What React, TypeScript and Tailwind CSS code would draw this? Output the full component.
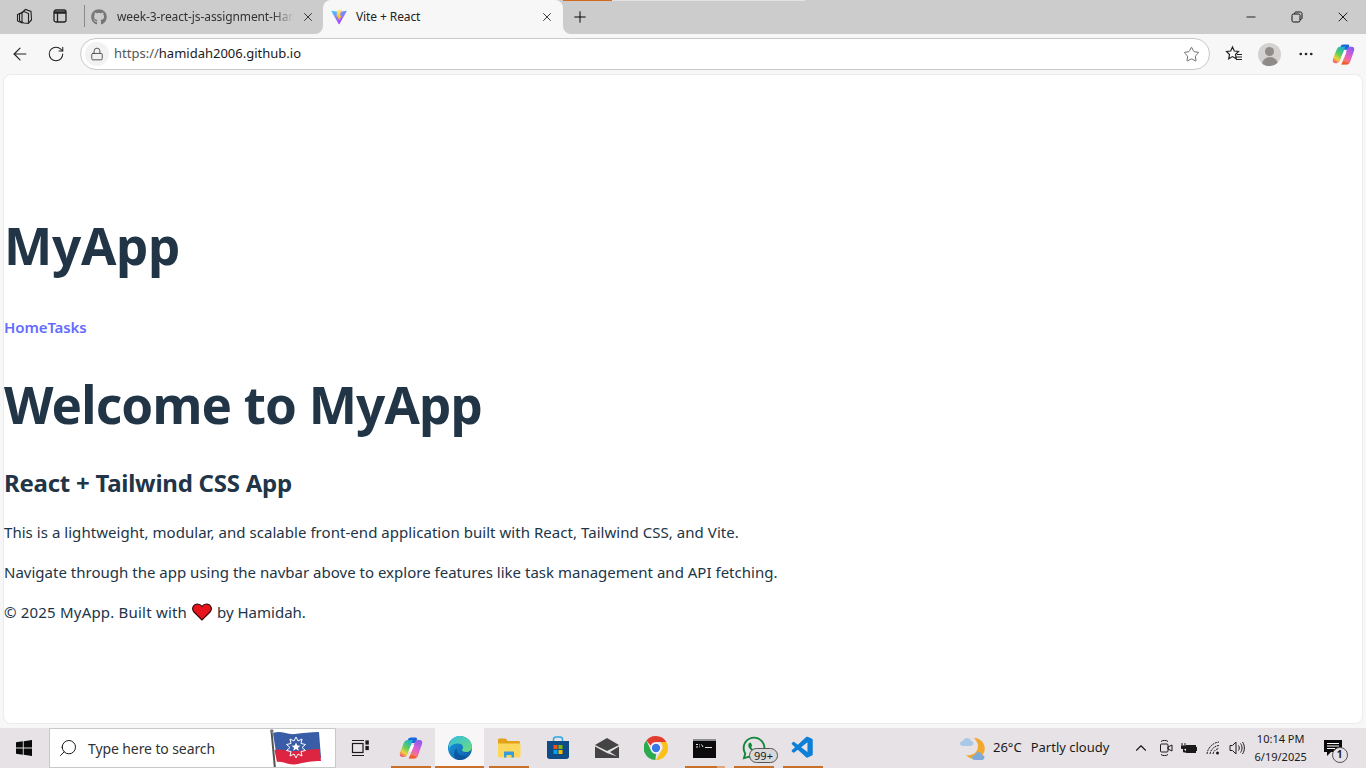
import { ArrowLeft, RotateCw, Lock, Star, X, Plus, Minus, Search, MoreHorizontal, ChevronUp } from "lucide-react";
import { FaGithub, FaWhatsapp } from "react-icons/fa";
import { VscVscode } from "react-icons/vsc";

const uiFont = "font-['Noto_Sans','Open_Sans',sans-serif]";

function ViteLogo() {
  return (
    <svg width="16" height="16" viewBox="0 0 32 32">
      <defs>
        <linearGradient id="viteA" x1="0" y1="0" x2="0.6" y2="1">
          <stop offset="0" stopColor="#41d1ff" />
          <stop offset="1" stopColor="#bd34fe" />
        </linearGradient>
        <linearGradient id="viteB" x1="0.4" y1="0" x2="0.5" y2="1">
          <stop offset="0" stopColor="#ffea83" />
          <stop offset="1" stopColor="#ffa800" />
        </linearGradient>
      </defs>
      <path d="M31 5 17 30c-.4.7-1.3.7-1.700 0L1 5c-.4-.7.2-1.500 1-1.400l14 2.500 14-2.500c.8-.1 1.400.7 1 1.400Z" fill="url(#viteA)" />
      <path d="M22.500 1 12 3l-.7 12 3.300.8L13.700 20l2.600-.7L15.500 24l6-11-3.500.7L19 8l3.500-7Z" fill="url(#viteB)" />
    </svg>
  );
}

function CopilotLogo({ size, id }: { size: number; id: string }) {
  return (
    <svg width={size} height={size} viewBox="0 0 24 24">
      <defs>
        <linearGradient id={`${id}L`} x1="0.7" y1="0" x2="0.2" y2="1">
          <stop offset="0" stopColor="#1fb2c9" />
          <stop offset="0.45" stopColor="#5fcf5c" />
          <stop offset="0.75" stopColor="#f2d03a" />
          <stop offset="1" stopColor="#f0557a" />
        </linearGradient>
        <linearGradient id={`${id}R`} x1="0.7" y1="0" x2="0.3" y2="1">
          <stop offset="0" stopColor="#8a5cf0" />
          <stop offset="0.55" stopColor="#e860c8" />
          <stop offset="1" stopColor="#f58a3c" />
        </linearGradient>
      </defs>
      <path d="M9 3Q10 1.500 12 1.500h4.500Q18.500 1.500 18 3.500l-1.500 3.500h-7Z" fill="#1668dc" />
      <path d="M5 6.500Q6 4 8.500 4H14L8.500 18q-1 3-3.500 3H3.500Q0 21 1 16.500Z" fill={`url(#${id}L)`} />
      <path d="M19 19.500Q18 22.500 15.500 22.500H10L15.500 7q1-3 3.500-3h1.500Q24 4 23 8Z" fill={`url(#${id}R)`} />
      <path d="M11.500 19 9.500 22.500h5.500q2 0 2.500-2Z" fill="#f0502e" opacity="0.8" />
      <path d="M12 9h3.200L12.500 15.500H9.500Z" fill="#ffffff" />
    </svg>
  );
}

function EdgeLogo() {
  return (
    <svg width="26" height="26" viewBox="0 0 26 26">
      <defs>
        <linearGradient id="edgeA" x1="0" y1="0" x2="1" y2="1">
          <stop offset="0" stopColor="#1b9de2" />
          <stop offset="1" stopColor="#0c59a4" />
        </linearGradient>
        <linearGradient id="edgeB" x1="0" y1="0" x2="1" y2="1">
          <stop offset="0" stopColor="#33bfe0" />
          <stop offset="1" stopColor="#6fdc7c" />
        </linearGradient>
      </defs>
      <circle cx="13" cy="13" r="12" fill="url(#edgeA)" />
      <path d="M2 10C4 4 8 1 13 1c6.500 0 12 5 12 11 0 3.500-3 5-6 5-2.500 0-4-1-4-2 0-.6 1-1 1-2.500C16 10 14 8.500 11 8.500 7 8.500 3.500 10 2 14Z" fill="url(#edgeB)" />
      <path d="M10 13c-1 4 2 8 7 8 1.500 0 3-.4 4-1-2 3-5 5-8 5-2 0-3-.5-4-1-3-2-2-9 1-11Z" fill="#0a4f95" opacity="0.75" />
    </svg>
  );
}

function FolderIcon() {
  return (
    <svg width="24" height="22" viewBox="0 0 24 22">
      <path d="M1 3c0-1 .6-1.500 1.500-1.500h6L11 4h10.500c1 0 1.500.6 1.500 1.500V8H1Z" fill="#e3a21a" />
      <path d="M1 6.500h21.500c.6 0 1 .4 1 1V19c0 1-.6 1.500-1.500 1.500H2.500C1.600 20.500 1 20 1 19Z" fill="#fbd75b" />
      <path d="M7 15.500c0-.6.4-1 1-1h8c.6 0 1 .4 1 1v5h-2.500v-2.500h-5v2.500H7Z" fill="#3a9bdc" />
    </svg>
  );
}

function StoreIcon() {
  return (
    <svg width="24" height="24" viewBox="0 0 24 24">
      <path d="M7.500 5V3.500C7.500 2 8.500 1 10 1h4c1.500 0 2.500 1 2.500 2.500V5" fill="none" stroke="#2fa8e0" strokeWidth="1.500" />
      <path d="M1 5h22v15.500c0 1.500-1 2.500-2.500 2.500h-17C2 23 1 22 1 20.500Z" fill="#0f4b84" />
      <rect x="7.500" y="9" width="4" height="4" fill="#f25022" />
      <rect x="12.500" y="9" width="4" height="4" fill="#7fba00" />
      <rect x="7.500" y="14" width="4" height="4" fill="#00a4ef" />
      <rect x="12.500" y="14" width="4" height="4" fill="#ffb900" />
    </svg>
  );
}

function MailIcon() {
  return (
    <svg width="24" height="20" viewBox="0 0 24 20">
      <path d="M0 7 12 0l12 7L12 13Z" fill="#444444" />
      <path d="M0 8.500v11.500h24V8.500L15 14l7 4.500-10-3.500Z" fill="#444444" />
    </svg>
  );
}

function ChromeIcon() {
  return (
    <svg width="24" height="24" viewBox="0 0 24 24">
      <path d="M12 0a12 12 0 0 1 10.400 6H12a6 6 0 0 0-5.400 3.400L2.400 4.400A12 12 0 0 1 12 0Z" fill="#e33b2e" />
      <path d="M22.400 6A12 12 0 0 1 12 24l5.200-9a6 6 0 0 0-1-9Z" fill="#fbc116" />
      <path d="M2.400 4.400 7 14.500a6 6 0 0 0 5 3.500l-.6 6A12 12 0 0 1 2.400 4.400Z" fill="#2da94f" />
      <circle cx="12" cy="12" r="5.300" fill="#ffffff" />
      <circle cx="12" cy="12" r="4.200" fill="#3b78e7" />
    </svg>
  );
}

function TerminalIcon() {
  return (
    <svg width="23" height="19" viewBox="0 0 23 19">
      <rect width="23" height="19" fill="#0b0b0b" />
      <rect width="23" height="2" fill="#8f8f8f" />
      <path d="M3 5.500h2M3 8h2M6.500 5.500v.8M6.500 7.500v.8M8.500 5.500l1.500 2.500M12 8.500h7" stroke="#e6e6e6" strokeWidth="1" fill="none" />
    </svg>
  );
}

function WindowsLogo() {
  return (
    <svg width="16" height="16" viewBox="0 0 16 16" fill="#0a0a0a">
      <path d="M0 2.300 6.800 1.300V7.600H0ZM7.700 1.200 16 0V7.600H7.700ZM0 8.400H6.800V14.700L0 13.700ZM7.700 8.400H16V16L7.700 14.800Z" />
    </svg>
  );
}

function JuneteenthFlag() {
  return (
    <svg width="52" height="40" viewBox="0 0 52 40">
      <path d="M3 4c8-3 14 2 22 1s15-2 24-2l2 26c-9 0-15 1-23 2s-15-3-21-1Z" fill="#3a5da8" />
      <path d="M4.500 21c7-2 14 2 22 1s15-2 23-2l1.500 12c-9 0-15 1-23 3s-15-3-21-2Z" fill="#dd2440" />
      <path d="M1.500 2 5 40" stroke="#555555" strokeWidth="2" />
      <circle cx="1.800" cy="2" r="1.800" fill="#777777" />
      <path d="m26 8 2 4 4-2-1 4.500 4.500 1-3.500 3 3.500 3-4.500 1 1 4.500-4-2-2 4-2-4-4 2 1-4.500-4.500-1 3.500-3-3.500-3 4.500-1-1-4.500 4 2Z" fill="none" stroke="#ffffff" strokeWidth="1" />
      <path d="m26 13.500 1.300 3 3.200.2-2.500 2 .8 3.100-2.800-1.700-2.800 1.700.8-3.100-2.500-2 3.200-.2Z" fill="#ffffff" />
    </svg>
  );
}

function WeatherIcon() {
  return (
    <svg width="26" height="26" viewBox="0 0 26 26">
      <path d="M14 3a10.500 10.500 0 1 1-8 17c6 1 12-2 12-9 0-3-2-6-4-8Z" fill="#f0a92e" />
      <path d="M3 11c-2 0-3-1-3-2.500S1.500 6 3 6c.5-2 2-3 4-3s3.500 1 4 3c1.500 0 2.500 1 2.500 2.500S12 11 10.500 11Z" fill="#a9c8e8" />
      <path d="M15 25c-2 0-3-1-3-2.500S13.500 20 15 20c.5-2 2-3 3.500-3s3 1 3.500 3c1.500 0 2.500 1 2.500 2.500S23 25 22 25Z" fill="#7fa9d6" />
    </svg>
  );
}

function TaskViewIcon() {
  return (
    <svg width="18" height="18" viewBox="0 0 18 18" fill="none" stroke="#1a1a1a" strokeWidth="1.200">
      <rect x="1.500" y="4.500" width="10.500" height="9" />
      <path d="M1 1.500h12M1 16.500h12" />
      <rect x="15" y="2" width="2.200" height="3" fill="#1a1a1a" />
      <rect x="15" y="7.500" width="2.200" height="3" fill="#1a1a1a" />
    </svg>
  );
}

function TrayIcons() {
  return (
    <div className="flex items-center text-[#1a1a1a]">
      <ChevronUp size={18} strokeWidth={1.500} className="mr-[9px]" />
      {/* Meet now */}
      <svg width="14" height="18" viewBox="0 0 14 18" fill="none" stroke="#1a1a1a" strokeWidth="1" className="mr-[8px]">
        <rect x="1.500" y="5" width="7.500" height="8" rx="1" />
        <path d="m9 8 4-2v6l-4-2Z" />
        <path d="M2 2.500C4 1 7 1 9 2.500M2 15.500c2 1.500 5 1.500 7 0" />
      </svg>
      {/* Battery charging */}
      <svg width="16" height="11" viewBox="0 0 16 11" className="mr-[9px]">
        <rect x="5" y="2" width="10" height="8" fill="#1a1a1a" />
        <rect x="15" y="4" width="1" height="4" fill="#1a1a1a" />
        <path d="M1 0v3M4 0v3M.5 3h4v2.500h-4ZM2.500 5.500V9h3" fill="#1a1a1a" stroke="#1a1a1a" strokeWidth="1" />
      </svg>
      {/* Wifi */}
      <svg width="16" height="14" viewBox="0 0 16 14" fill="none" stroke="#1a1a1a" strokeWidth="1" className="mr-[7px]">
        <path d="M1 13C1.500 7 7 1.500 13 1M4 13c.5-4 4-8 9-8.500M7 13c.3-2.500 2.500-5 6-5.500" strokeDasharray="2 0.800" />
        <circle cx="11.500" cy="12" r="1.500" fill="#1a1a1a" stroke="none" />
      </svg>
      {/* Volume */}
      <svg width="16" height="16" viewBox="0 0 16 16" fill="none" stroke="#1a1a1a" strokeWidth="1">
        <path d="M1 5.500h2.500L7 2v12l-3.500-3.500H1ZM9.500 5.500c1 1.500 1 3.500 0 5M11.500 3.500c2 2.500 2 6.500 0 9M13.500 2c2.500 3.500 2.500 8.500 0 12" />
      </svg>
    </div>
  );
}

const taskIcons = [
  { key: "folder", icon: <FolderIcon />, bar: true, pale: false },
  { key: "store", icon: <StoreIcon />, bar: false, pale: false },
  { key: "mail", icon: <MailIcon />, bar: false, pale: false },
  { key: "chrome", icon: <ChromeIcon />, bar: false, pale: false },
  { key: "terminal", icon: <TerminalIcon />, bar: true, pale: true },
];

function TaskButton({ children, bar, active, pale }: { children: React.ReactNode; bar?: boolean; active?: boolean; pale?: boolean }) {
  return (
    <div className={`relative flex h-full w-[49px] items-center justify-center ${active ? "bg-[#f8f6f7]" : ""}`}>
      {children}
      {bar && <div className={`absolute bottom-0 h-[2px] bg-[#c8702a] ${active ? "left-0 right-0" : "left-[5px] right-[4px]"}`} />}
      {pale && <div className="absolute bottom-0 right-[4px] h-[2px] w-[8px] bg-[#dfa67c]" />}
    </div>
  );
}

export default function App() {
  return (
    <div className={`flex h-[768px] w-[1366px] flex-col overflow-hidden bg-[#f7f7f7] ${uiFont}`}>
      {/* Tab strip */}
      <div className="relative flex h-[34px] items-end bg-[#cccccc]">
        <div className="absolute left-[563px] top-0 h-[1px] w-[49px] bg-[#d2691e]" />
        <div className="absolute left-[612px] top-0 h-[1px] w-[193px] bg-[#e2e2e2]" />
        <div className="flex h-full w-[85px] shrink-0 items-center pb-[2px] pl-[16px] text-[#1a1a1a]">
          <svg width="17" height="17" viewBox="0 0 17 17" fill="none" stroke="#222222" strokeWidth="1.100">
            <path d="M6 4.500 9.500 1.500 15 3.500 15.500 12 12 15.500M3.500 6 8 3.500 12.500 5.500 12.500 15.500 8 15 3.500 13Z" />
            <path d="M1.500 6.500 6 4.500V15L1.500 13Z" />
          </svg>
          <svg width="14" height="14" viewBox="0 0 14 14" fill="none" stroke="#222222" strokeWidth="1.300" className="ml-[20px]">
            <rect x="1" y="1" width="12" height="12" rx="2" />
            <path d="M1 3.500h12" strokeWidth="2.500" />
            <path d="M4.500 3.500V13" />
          </svg>
          <div className="ml-[17px] h-[22px] w-px shrink-0 bg-[#8a8a8a]" />
        </div>
        <div className="flex h-full w-[238px] shrink-0 items-center pb-[1px] pl-[6px] text-[#333333]">
          <FaGithub size={16} className="shrink-0 text-[#777777]" />
          <span className="ml-[10px] w-[177px] overflow-hidden whitespace-nowrap text-[12px] tracking-[-0.1px] [mask-image:linear-gradient(to_right,black_88%,transparent)]">
            week-3-react-js-assignment-Hamidah
          </span>
          <X size={14} strokeWidth={1.500} className="ml-[7px] shrink-0 text-[#222222]" />
        </div>
        <div className="relative flex h-full w-[240px] shrink-0 items-center rounded-t-[8px] bg-[#f7f7f7] pb-[1px] pl-[8px] text-[#222222]">
          <ViteLogo />
          <span className="ml-[9px] w-[184px] text-[12px] tracking-[-0.1px]">Vite + React</span>
          <X size={14} strokeWidth={1.500} className="text-[#222222]" />
          {/* flares where the active tab meets the toolbar */}
          <div className="absolute bottom-0 left-[-8px] h-[8px] w-[8px] bg-[#f7f7f7]">
            <div className="h-full w-full rounded-br-[8px] bg-[#cccccc]" />
          </div>
          <div className="absolute bottom-0 right-[-8px] h-[8px] w-[8px] bg-[#f7f7f7]">
            <div className="h-full w-full rounded-bl-[8px] bg-[#cccccc]" />
          </div>
        </div>
        <div className="ml-[8px] flex h-full items-center pb-[1px]">
          <Plus size={18} strokeWidth={1.300} className="text-black" />
        </div>
        <div className="ml-auto flex h-full items-center pb-[1px] text-black">
          <div className="flex w-[46px] justify-center"><Minus size={14} strokeWidth={1.400} /></div>
          <div className="flex w-[46px] justify-center">
            <svg width="12" height="12" viewBox="0 0 12 12" fill="none" stroke="#111111" strokeWidth="1">
              <rect x="1" y="3" width="8" height="8" rx="1.500" />
              <path d="M3.500 3V2.500c0-.8.7-1.500 1.500-1.500h4.500C10.300 1 11 1.700 11 2.500V7c0 .8-.7 1.500-1.500 1.500H9" />
            </svg>
          </div>
          <div className="flex w-[46px] justify-center"><X size={16} strokeWidth={1.300} /></div>
        </div>
      </div>

      {/* Address bar */}
      <div className="flex h-[40px] items-center bg-[#f7f7f7] text-[#222222]">
        <div className="flex w-[80px] items-center pl-[10px]">
          <ArrowLeft size={20} strokeWidth={1.400} />
          <RotateCw size={18} strokeWidth={1.400} className="ml-[17px]" />
        </div>
        <div className="flex h-[32px] w-[1130px] items-center rounded-full border border-[#c9c9c9] bg-white pl-[4px] pr-[9px]">
          <div className="flex h-[24px] w-[24px] items-center justify-center rounded-full bg-[#f2f2f2]">
            <Lock size={14} strokeWidth={1.500} className="text-[#444444]" />
          </div>
          <span className="ml-[5px] text-[13px] text-[#555555]">
            https://<span className="text-[#1a1a1a]">hamidah2006.github.io</span>
          </span>
          <Star size={17} strokeWidth={1.200} className="ml-auto text-[#555555]" />
        </div>
        <div className="flex flex-1 items-center">
          <svg width="18" height="18" viewBox="0 0 18 18" fill="none" stroke="#222222" strokeWidth="1.200" className="ml-[15px]">
            <path d="m7.500 2 1.800 4 4.200.5-3 3 .8 4.300-3.800-2.200-3.800 2.200.8-4.300-3-3 4.200-.5ZM12 9.500h5M11.500 12h5.500M11 14.500h6" />
          </svg>
          <div className="relative ml-[15px] h-[23px] w-[23px] overflow-hidden rounded-full bg-[#d4d2d0]">
            <div className="mx-auto mt-[4px] h-[9px] w-[9px] rounded-full bg-[#8f8b88]" />
            <div className="mx-auto mt-[1px] h-[9px] w-[16px] rounded-t-full bg-[#8f8b88]" />
          </div>
          <MoreHorizontal size={18} strokeWidth={1.600} className="ml-[16px]" />
          <div className="ml-[17px]"><CopilotLogo size={23} id="cpTop" /></div>
        </div>
      </div>

      {/* Page content */}
      <main className="mx-[3px] h-[650px] rounded-[8px] border border-[#ebebeb] bg-white pt-[142px] text-[#213547]">
        <h1 className="text-[51.2px] font-bold leading-[56px] tracking-[-0.3px]">MyApp</h1>
        <nav className="mt-[42px] text-[15px] font-semibold leading-[24px] tracking-[-0.1px] text-[#646cff]">
          <a>Home</a><a>Tasks</a>
        </nav>
        <h1 className="mt-[37px] text-[51.2px] font-bold leading-[56px] tracking-[-0.85px]">Welcome to MyApp</h1>
        <h2 className="mt-[33px] text-[24px] font-bold leading-[36px] tracking-[-0.25px]">React + Tailwind CSS App</h2>
        <p className="mt-[19px] text-[15px] leading-[24px] tracking-[0.045px]">
          This is a lightweight, modular, and scalable front-end application built with React, Tailwind CSS, and Vite.
        </p>
        <p className="mt-[16px] text-[15px] leading-[24px] tracking-[0.01px]">
          Navigate through the app using the navbar above to explore features like task management and API fetching.
        </p>
        <p className="mt-[16px] flex items-center text-[15px] leading-[24px]">
          <span className="tracking-[0.2px]">© 2025 MyApp. Built with</span>
          <svg width="20" height="18" viewBox="0 0 20 18" className="mx-[5px]">
            <path d="M10 17 2 9C-1 5.500 1.500 1 5.500 1 7.500 1 9 2 10 3.500 11 2 12.500 1 14.500 1 18.500 1 21 5.500 18 9Z" fill="#e8141c" stroke="#3a0a0a" strokeWidth="1.200" />
          </svg>
          by Hamidah.
        </p>
      </main>

      {/* Windows taskbar */}
      <div className="mt-auto flex h-[40px] items-center bg-[#e7e2e5] text-[#1a1a1a]">
        <div className="flex h-full w-[49px] items-center justify-center pr-[1px]"><WindowsLogo /></div>
        <div className="relative flex h-[40px] w-[287px] items-center overflow-hidden border border-[#c8c8c8] bg-white pl-[8px]">
          <Search size={20} strokeWidth={1.200} className="-scale-x-100" />
          <span className="ml-[10px] text-[14px] tracking-[-0.1px] text-[#333333]">Type here to search</span>
          <div className="absolute left-[220px] top-0"><JuneteenthFlag /></div>
        </div>
        <div className="flex h-full w-[50px] items-center justify-center pr-[2px]"><TaskViewIcon /></div>
        <TaskButton bar><CopilotLogo size={24} id="cpBar" /></TaskButton>
        <TaskButton bar active><EdgeLogo /></TaskButton>
        {taskIcons.map((t) => (
          <TaskButton key={t.key} bar={t.bar} pale={t.pale}>{t.icon}</TaskButton>
        ))}
        <TaskButton bar>
          <FaWhatsapp size={26} className="text-[#12863c]" />
          <div className="absolute left-[20px] top-[20px] flex h-[15px] w-[29px] items-center justify-center rounded-full border border-[#555555] bg-[#d8d8d8] text-[11px] leading-none">99+</div>
        </TaskButton>
        <TaskButton bar><VscVscode size={26} className="text-[#0e7fd6]" /></TaskButton>

        <div className="ml-[133px] flex items-center">
          <WeatherIcon />
          <span className="ml-[7px] whitespace-nowrap text-[13px]">26°C</span>
          <span className="ml-[9px] w-[101px] whitespace-nowrap text-[13px]">Partly cloudy</span>
        </div>
        <TrayIcons />
        <div className="ml-[7px] w-[58px] text-center text-[11px] leading-[18px]">
          <div>10:14 PM</div>
          <div>6/19/2025</div>
        </div>
        <div className="relative ml-[14px]">
          <svg width="18" height="17" viewBox="0 0 18 17">
            <path d="M0 0h18v12H7l-4 4v-4H0Z" fill="#0a0a0a" />
            <path d="M3 3.500h12M3 6h12M3 8.500h8" stroke="#ffffff" strokeWidth="1" />
          </svg>
          <div className="absolute left-[8px] top-[7px] flex h-[16px] w-[16px] items-center justify-center rounded-full border border-[#555555] bg-[#e7e2e5] text-[10px] font-bold">1</div>
        </div>
      </div>
    </div>
  );
}
